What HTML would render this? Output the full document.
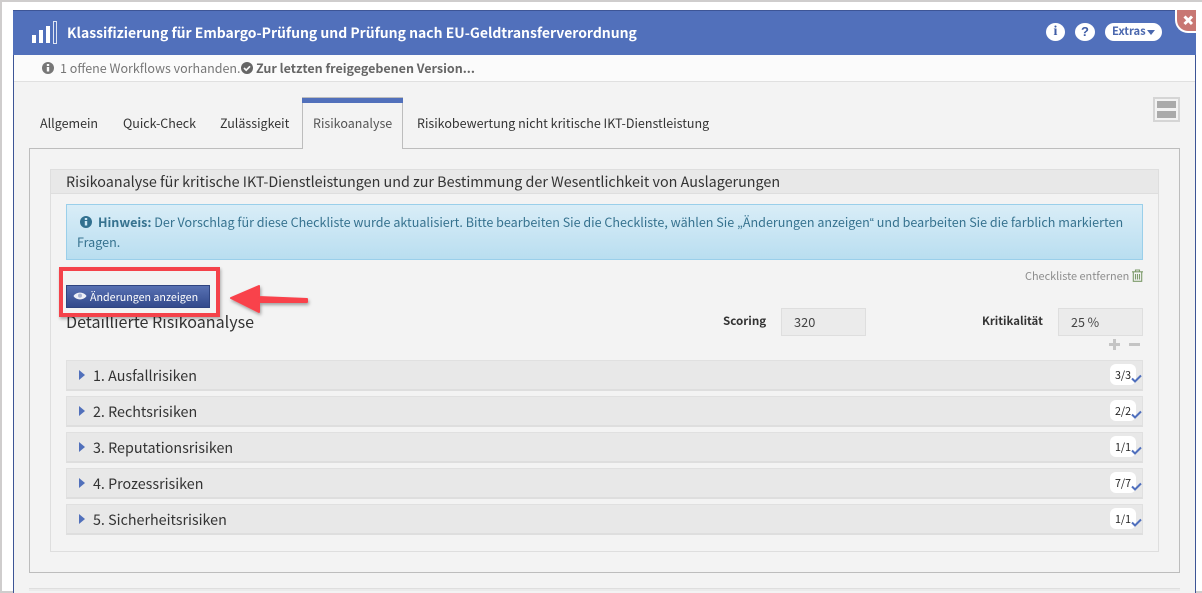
<!DOCTYPE html>
<html><head><meta charset="utf-8">
<style>
html,body{margin:0;padding:0;width:1202px;height:593px;overflow:hidden;background:#fff}
body{position:relative;font-family:"Noto Sans CJK SC","Liberation Sans",sans-serif;font-size:12.5px;color:#333}
.a{position:absolute;box-sizing:border-box;white-space:nowrap}
.acc{position:absolute;left:66px;width:1077px;height:31px;background:#e8e8e8;border:1px solid #e0e0e0;border-bottom:2px solid #dedede;box-sizing:border-box}
.acc .tri{position:absolute;left:12px;top:9px;width:0;height:0;border-left:6px solid #5170bb;border-top:5px solid transparent;border-bottom:5px solid transparent}
.acc .l{position:absolute;left:26px;top:4px;font-size:14.3px;line-height:22px;color:#333}
.acc .b{position:absolute;left:1043px;top:3px;width:26px;height:21px;background:#fff;border-radius:6px;font-size:10.7px;line-height:23px;text-align:center;color:#222;box-sizing:border-box}
.acc svg{position:absolute;left:1064px;top:13px}
.tab{position:absolute;top:113px;font-size:12.5px;line-height:20px;color:#333;white-space:nowrap}
.q{font-family:"Liberation Sans",sans-serif}
</style></head><body>
<div class="a" style="left:0;top:0;width:1202px;height:2px;background:#cfcdcd"></div>
<div class="a" style="left:0;top:0;width:2px;height:593px;background:#cfcdcd"></div>
<div class="a" style="left:0;top:591px;width:1202px;height:2px;background:#cfcdcd"></div>
<div class="a" style="left:13px;top:10px;width:1183px;height:583px;background:#f3f3f3;border-left:1px solid #3d5596;border-right:1px solid #3d5596"></div>
<div class="a" style="left:13px;top:10px;width:1183px;height:45px;background:#5170bb;border-top:1px solid #3d5596"></div>
<div class="a" style="left:14px;top:55px;width:1181px;height:27px;background:#fbfbfb;border-bottom:1px solid #e0e0e0"></div>

<div class="a" style="left:32px;top:35px;width:4px;height:8px;background:#fff"></div>
<div class="a" style="left:39px;top:30px;width:4px;height:13px;background:#fff"></div>
<div class="a" style="left:46px;top:26px;width:4px;height:17px;background:#fff"></div>
<div class="a" style="left:53px;top:21px;width:4px;height:23px;border:1px solid #dfe5f3"></div>
<div class="a" style="left:67px;top:21px;font-size:13.95px;line-height:24px;font-weight:700;color:#fff">Klassifizierung für Embargo-Prüfung und Prüfung nach EU-Geldtransferverordnung</div>

<div class="a" style="left:1046px;top:23px;width:19px;height:18px;border-radius:50%;background:#fff;color:#3f5da6;font:700 14px/18px 'Liberation Serif',serif;text-align:center">i</div>
<div class="a" style="left:1075px;top:23px;width:20px;height:18px;border-radius:50%;background:#fff;color:#3f5da6;font:700 13px/18px 'Liberation Sans',sans-serif;text-align:center">?</div>
<div class="a" style="left:1105px;top:23px;width:57px;height:18px;border-radius:9px;background:#fff;color:#4a67ae;font-size:11.2px;font-weight:700;line-height:17px;padding-left:7px">Extras</div>
<div class="a" style="left:1147px;top:30px;width:0;height:0;border-top:5px solid #4a67ae;border-left:4.5px solid transparent;border-right:4.5px solid transparent"></div>

<div class="a" style="left:1175px;top:10px;width:21px;height:23px;background:#c87773;border-left:2px solid #fff;border-bottom:2px solid #fff;border-bottom-left-radius:13px"></div>
<svg class="a" style="left:1182px;top:14px" width="13" height="13" viewBox="0 0 13 13"><path d="M2.5 2.5L10 10M10 2.5L2.5 10" stroke="#fff" stroke-width="3"/></svg>

<svg class="a" style="left:42px;top:62px" width="12" height="12" viewBox="0 0 12 12"><circle cx="6" cy="6" r="6" fill="#777"/><rect x="4.8" y="2" width="2.4" height="2" fill="#fbfbfb"/><rect x="4.8" y="5" width="2.4" height="4.5" fill="#fbfbfb"/></svg>
<div class="a" style="left:60px;top:57px;font-size:12.5px;line-height:21px;color:#777">1 offene Workflows vorhanden.</div>
<svg class="a" style="left:241px;top:62px" width="12" height="12" viewBox="0 0 12 12"><circle cx="6" cy="6" r="6" fill="#666"/><path d="M3 6l2.2 2.2L9 4.3" stroke="#fbfbfb" stroke-width="1.7" fill="none"/></svg>
<div class="a" style="left:256px;top:57px;font-size:12.5px;line-height:21px;font-weight:700;color:#666">Zur letzten freigegebenen Version...</div>

<div class="a" style="left:29px;top:148px;width:1151px;height:425px;border:1px solid #bdbdbd"></div>
<div class="a" style="left:302px;top:97px;width:101px;height:52px;background:#f3f3f3;border:1px solid #bdbdbd;border-top:none;border-bottom:none"></div>
<div class="a" style="left:302px;top:97px;width:101px;height:6px;background:#5170bb;border-top:1px solid #bdbdbd"></div>
<div class="tab" style="left:40px">Allgemein</div>
<div class="tab" style="left:123px">Quick-Check</div>
<div class="tab" style="left:220px">Zulässigkeit</div>
<div class="tab" style="left:313px;color:#555">Risikoanalyse</div>
<div class="tab" style="left:417px">Risikobewertung nicht kritische IKT-Dienstleistung</div>

<div class="a" style="left:1153px;top:97px;width:27px;height:25px;border:2px solid #d5d5d5;background:#f3f3f3"></div>
<div class="a" style="left:1157px;top:101px;width:19px;height:7px;background:#aaa"></div>
<div class="a" style="left:1157px;top:111px;width:19px;height:7px;background:#aaa"></div>

<div class="a" style="left:50px;top:169px;width:1109px;height:383px;border:1px solid #dedede"></div>
<div class="a" style="left:51px;top:170px;width:1107px;height:24px;background:#e8e8e8;border-bottom:1px solid #dedede"></div>
<div class="a" style="left:66px;top:171px;font-size:14.34px;line-height:22px;color:#333">Risikoanalyse für kritische IKT-Dienstleistungen und zur Bestimmung der Wesentlichkeit von Auslagerungen</div>

<div class="a" style="left:66px;top:204px;width:1077px;height:56px;background:linear-gradient(#d9edf7,#b9def0);border:1px solid #9acfea"></div>
<svg class="a" style="left:80px;top:216px" width="12" height="12" viewBox="0 0 12 12"><circle cx="6" cy="6" r="6" fill="#31708f"/><rect x="4.8" y="2" width="2.4" height="2" fill="#cde7f4"/><rect x="4.8" y="5" width="2.4" height="4.5" fill="#cde7f4"/></svg>
<div class="a" style="left:98px;top:212px;font-size:12.56px;line-height:20px;color:#36728f"><b>Hinweis:</b> Der Vorschlag für diese Checkliste wurde aktualisiert. Bitte bearbeiten Sie die Checkliste, wählen Sie „Änderungen anzeigen<span class="q">“</span> und bearbeiten Sie die farblich markierten</div>
<div class="a" style="left:77px;top:232px;font-size:12.56px;line-height:20px;color:#36728f">Fragen.</div>

<div class="a" style="left:1025px;top:266px;font-size:10.9px;line-height:20px;color:#8d8d8d">Checkliste entfernen</div>
<svg class="a" style="left:1132px;top:269px" width="11" height="13" viewBox="0 0 11 13"><path d="M3.500 2.500V1h4v1.500M0 2.800h11M1.300 3v9.300h8.400V3M3.500 5v5.500M5.500 5v5.500M7.500 5v5.500" stroke="#7d9b6b" stroke-width="1.1" fill="none"/></svg>

<div class="a" style="left:66px;top:309px;font-size:16.1px;line-height:24px;color:#333">Detaillierte Risikoanalyse</div>

<div class="a" style="left:66px;top:285px;width:144px;height:23px;background:linear-gradient(#5871b3,#334a8c);border:1px solid #2f4480"></div>
<svg class="a" style="left:73px;top:291px" width="14" height="10" viewBox="0 0 14 10"><path d="M0.500 5C3 0.500 11 0.500 13.500 5C11 9.500 3 9.500 0.500 5Z" fill="#eef0f7"/><circle cx="7" cy="4.600" r="2" fill="#a9b4d3"/></svg>
<div class="a" style="left:90px;top:288px;font-size:10.7px;line-height:20px;color:#fff">Änderungen anzeigen</div>

<div class="a" style="left:59px;top:267px;width:161px;height:50px;border:4px solid #f4424a;box-shadow:1px 2px 3px rgba(0,0,0,.3)"></div>

<svg class="a" style="left:226px;top:278px" width="90" height="40" viewBox="0 0 90 40"><defs><filter id="s" x="-20%" y="-20%" width="140%" height="150%"><feDropShadow dx="1" dy="2" stdDeviation="1.500" flood-color="#000" flood-opacity=".35"/></filter></defs><path d="M5 20L33 8V19L81 21V24L33 24V34Z" fill="#f9424b" stroke="#f9424b" stroke-width="2" stroke-linejoin="round" filter="url(#s)"/></svg>

<div class="a" style="left:723px;top:311px;font-size:11.6px;font-weight:700;line-height:20px;color:#333">Scoring</div>
<div class="a" style="left:781px;top:308px;width:85px;height:28px;background:#ebebeb;border:1px solid #dedede;font-size:12.8px;line-height:26px;padding-left:12px;color:#444">320</div>
<div class="a" style="left:982px;top:311px;font-size:11.4px;font-weight:700;line-height:20px;color:#333">Kritikalität</div>
<div class="a" style="left:1058px;top:308px;width:85px;height:28px;background:#ebebeb;border:1px solid #dedede;font-size:12.5px;line-height:26px;padding-left:12px;color:#444">25 %</div>

<div class="a" style="left:1109px;top:343px;width:11px;height:3px;background:#c4c4c4"></div>
<div class="a" style="left:1113px;top:339px;width:3px;height:11px;background:#c4c4c4"></div>
<div class="a" style="left:1129px;top:343px;width:11px;height:3px;background:#c4c4c4"></div>

<div class="acc" style="top:360px"><div class="tri"></div><div class="l">1. Ausfallrisiken</div><div class="b">3/3</div><svg width="11" height="9" viewBox="0 0 11 9"><path d="M1 4.500L4 7.500L10 1.500" stroke="#4f6fbd" stroke-width="2" fill="none"/></svg></div>
<div class="acc" style="top:396px"><div class="tri"></div><div class="l">2. Rechtsrisiken</div><div class="b">2/2</div><svg width="11" height="9" viewBox="0 0 11 9"><path d="M1 4.500L4 7.500L10 1.500" stroke="#4f6fbd" stroke-width="2" fill="none"/></svg></div>
<div class="acc" style="top:432px"><div class="tri"></div><div class="l">3. Reputationsrisiken</div><div class="b">1/1</div><svg width="11" height="9" viewBox="0 0 11 9"><path d="M1 4.500L4 7.500L10 1.500" stroke="#4f6fbd" stroke-width="2" fill="none"/></svg></div>
<div class="acc" style="top:468px"><div class="tri"></div><div class="l">4. Prozessrisiken</div><div class="b">7/7</div><svg width="11" height="9" viewBox="0 0 11 9"><path d="M1 4.500L4 7.500L10 1.500" stroke="#4f6fbd" stroke-width="2" fill="none"/></svg></div>
<div class="acc" style="top:504px"><div class="tri"></div><div class="l">5. Sicherheitsrisiken</div><div class="b">1/1</div><svg width="11" height="9" viewBox="0 0 11 9"><path d="M1 4.500L4 7.500L10 1.500" stroke="#4f6fbd" stroke-width="2" fill="none"/></svg></div>

<div class="a" style="left:29px;top:588px;width:1151px;height:3px;background:#ebebeb;border-top:1px solid #dedede"></div>
</body></html>
